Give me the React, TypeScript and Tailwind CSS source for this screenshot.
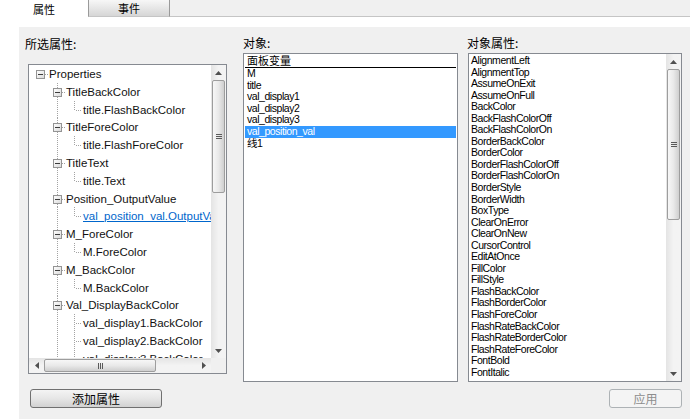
import React from 'react';

type TreeItem = { l: number; t: string; link?: boolean; full?: boolean };

const tree: TreeItem[] = [
  { l: 0, t: 'Properties' },
  { l: 1, t: 'TitleBackColor' },
  { l: 2, t: 'title.FlashBackColor' },
  { l: 1, t: 'TitleForeColor' },
  { l: 2, t: 'title.FlashForeColor' },
  { l: 1, t: 'TitleText' },
  { l: 2, t: 'title.Text' },
  { l: 1, t: 'Position_OutputValue' },
  { l: 2, t: 'val_position_val.OutputValue', link: true },
  { l: 1, t: 'M_ForeColor' },
  { l: 2, t: 'M.ForeColor' },
  { l: 1, t: 'M_BackColor' },
  { l: 2, t: 'M.BackColor' },
  { l: 1, t: 'Val_DisplayBackColor' },
  { l: 2, t: 'val_display1.BackColor', full: true },
  { l: 2, t: 'val_display2.BackColor', full: true },
  { l: 2, t: 'val_display3.BackColor' },
];

const objects = ['M', 'title', 'val_display1', 'val_display2', 'val_display3', 'val_position_val', '线1'];

const props = [
  'AlignmentLeft', 'AlignmentTop', 'AssumeOnExit', 'AssumeOnFull', 'BackColor', 'BackFlashColorOff',
  'BackFlashColorOn', 'BorderBackColor', 'BorderColor', 'BorderFlashColorOff', 'BorderFlashColorOn',
  'BorderStyle', 'BorderWidth', 'BoxType', 'ClearOnError', 'ClearOnNew', 'CursorControl', 'EditAtOnce',
  'FillColor', 'FillStyle', 'FlashBackColor', 'FlashBorderColor', 'FlashForeColor', 'FlashRateBackColor',
  'FlashRateBorderColor', 'FlashRateForeColor', 'FontBold', 'FontItalic',
];

const DOT = '#a3a3a3';

function MinusBox({ x }: { x: number }) {
  return (
    <g>
      <defs>
        <linearGradient id="boxg" x1="0" y1="0" x2="1" y2="1">
          <stop offset="0" stopColor="#ffffff" />
          <stop offset="1" stopColor="#d9d9d9" />
        </linearGradient>
      </defs>
      <rect x={x + 0.5} y={5.5} width={8} height={8} fill="url(#boxg)" stroke="#949494" />
      <line x1={x + 2} x2={x + 7} y1={9.5} y2={9.5} stroke="#3c3c3c" />
    </g>
  );
}

function TreeRow({ item }: { item: TreeItem }) {
  const w = 20 + 17 * item.l;
  return (
    <div className="flex h-[17.8px] items-start whitespace-nowrap">
      <svg width={w} height={18} className="shrink-0 overflow-visible" shapeRendering="crispEdges">
        {item.l >= 1 && (
          <line x1={28.5} x2={28.5} y1={0} y2={18} stroke={DOT} strokeDasharray="1 1" />
        )}
        {item.l === 0 && (
          <>
            <line x1={16} x2={20} y1={9.5} y2={9.5} stroke={DOT} strokeDasharray="1 1" />
            <MinusBox x={7} />
          </>
        )}
        {item.l === 1 && (
          <>
            <line x1={33} x2={37} y1={9.5} y2={9.5} stroke={DOT} strokeDasharray="1 1" />
            <MinusBox x={24} />
          </>
        )}
        {item.l === 2 && (
          <>
            <line x1={45.5} x2={45.5} y1={0} y2={item.full ? 18 : 9} stroke={DOT} strokeDasharray="1 1" />
            <line x1={47} x2={53} y1={9.5} y2={9.5} stroke={DOT} strokeDasharray="1 1" />
          </>
        )}
      </svg>
      <span
        className={
          item.link
            ? 'text-[11.5px] leading-[18px] text-[#0066cc] underline'
            : 'text-[11.5px] leading-[18px] text-[#111111]'
        }
      >
        {item.t}
      </span>
    </div>
  );
}

function Tri({ dir }: { dir: 'up' | 'down' | 'left' | 'right' }) {
  const pts =
    dir === 'up'
      ? '0,4 7,4 3.5,0'
      : dir === 'down'
      ? '0,0 7,0 3.5,4'
      : dir === 'left'
      ? '4,0 4,7 0,3.5'
      : '0,0 0,7 4,3.5';
  const horiz = dir === 'left' || dir === 'right';
  return (
    <svg width={horiz ? 4 : 7} height={horiz ? 7 : 4}>
      <polygon points={pts} fill="#505050" />
    </svg>
  );
}

function VScroll({ thumb }: { thumb: number }) {
  return (
    <div className="flex w-[15px] shrink-0 flex-col bg-gradient-to-r from-[#e4e4e4] via-[#f3f3f3] to-[#f3f3f3]">
      <div className="flex h-[15px] items-center justify-center">
        <Tri dir="up" />
      </div>
      <div className="flex-1">
        <div
          className="mx-[1px] flex flex-col items-center justify-center gap-[1px] rounded-[2px] border border-[#9d9d9d] bg-gradient-to-r from-[#f7f7f7] via-[#e9e9e9] to-[#cfcfcf]"
          style={{ height: thumb }}
        >
          <div className="h-[1px] w-[6px] bg-[#5a5a5a]" />
          <div className="h-[1px] w-[6px] bg-[#5a5a5a]" />
          <div className="h-[1px] w-[6px] bg-[#5a5a5a]" />
        </div>
      </div>
      <div className="flex h-[15px] items-center justify-center">
        <Tri dir="down" />
      </div>
    </div>
  );
}

function HScroll({ thumb }: { thumb: number }) {
  return (
    <div className="flex h-[15px] flex-1 bg-gradient-to-b from-[#e4e4e4] via-[#f3f3f3] to-[#f3f3f3]">
      <div className="flex w-[15px] items-center justify-center">
        <Tri dir="left" />
      </div>
      <div className="flex-1 py-[1px]">
        <div
          className="flex h-full items-center justify-center gap-[1px] rounded-[2px] border border-[#9d9d9d] bg-gradient-to-b from-[#f7f7f7] via-[#e9e9e9] to-[#cfcfcf]"
          style={{ width: thumb }}
        >
          <div className="h-[6px] w-[1px] bg-[#5a5a5a]" />
          <div className="h-[6px] w-[1px] bg-[#5a5a5a]" />
          <div className="h-[6px] w-[1px] bg-[#5a5a5a]" />
        </div>
      </div>
      <div className="flex w-[15px] items-center justify-center">
        <Tri dir="right" />
      </div>
    </div>
  );
}

export default function App() {
  return (
    <div className="h-[419px] w-[690px] overflow-hidden bg-white font-['Liberation_Sans','Noto_Sans_CJK_SC',sans-serif] text-black">
      {/* tabs */}
      <div className="flex h-[17px]">
        <div className="flex w-[88px] items-center justify-center font-['Noto_Sans_CJK_SC',sans-serif] text-[11px] leading-[14px]">
          属性
        </div>
        <div className="flex w-[82px] items-center justify-center border-x border-b border-x-[#9a9a9a] border-b-[#c5c5c5] bg-gradient-to-b from-[#f7f7f7] to-[#d6d6d6] font-['Noto_Sans_CJK_SC',sans-serif] text-[11px] leading-[14px]">
          事件
        </div>
        <div className="flex-1 border-b border-[#c5c5c5] bg-[#f0f0f0]" />
      </div>
      <div className="h-[10px]" />

      {/* panel */}
      <div className="ml-[19px] flex h-[392px] flex-col bg-[#f0f0f0]">
        <div className="flex h-[362px]">
          {/* left column */}
          <div className="ml-[6px] flex w-[202px] flex-col pt-[10px]">
            <div className="h-[14px] font-['Noto_Sans_CJK_SC',sans-serif] text-[12px] leading-[14px]">所选属性:</div>
            <div className="ml-[3px] mt-[13px] flex h-[310px] w-[199px] flex-col border border-[#868a91] bg-white">
              <div className="flex min-h-0 flex-1">
                <div className="min-w-0 flex-1 overflow-hidden">
                  {tree.map((it, i) => (
                    <TreeRow key={i} item={it} />
                  ))}
                </div>
                <VScroll thumb={113} />
              </div>
              <div className="flex h-[15px]">
                <HScroll thumb={112} />
                <div className="w-[15px] bg-[#f0f0f0]" />
              </div>
            </div>
          </div>

          {/* middle column */}
          <div className="ml-[16px] flex w-[215px] flex-col pt-[9px]">
            <div className="h-[14px] font-['Noto_Sans_CJK_SC',sans-serif] text-[12px] leading-[14px]">对象:</div>
            <div className="mt-[3px] h-[329px] border border-[#868a91] bg-white">
              <div className="mx-[1px] h-[14px] border-b border-black pl-[2px] font-['Noto_Sans_CJK_SC',sans-serif] text-[11px] leading-[13px]">
                面板变量
              </div>
              {objects.map((o, i) =>
                o === 'val_position_val' ? (
                  <div
                    key={i}
                    className="mx-[1px] h-[11.6px] bg-[#3399ff] pl-[2px] text-[10.5px] leading-[11.6px] tracking-[-0.45px] text-white"
                  >
                    {o}
                  </div>
                ) : (
                  <div
                    key={i}
                    className="mx-[1px] h-[11.6px] pl-[2px] text-[10.5px] leading-[11.6px] tracking-[-0.45px]"
                  >
                    {o}
                  </div>
                )
              )}
            </div>
          </div>

          {/* right column */}
          <div className="ml-[9px] flex w-[215px] flex-col pt-[9px]">
            <div className="h-[14px] font-['Noto_Sans_CJK_SC',sans-serif] text-[12px] leading-[14px]">对象属性:</div>
            <div className="ml-[1px] mt-[3px] flex h-[329px] w-[214px] border border-[#868a91] bg-white">
              <div className="min-w-0 flex-1 overflow-hidden pt-[1px]">
                {props.map((p, i) => (
                  <div key={i} className="h-[11.55px] pl-[2px] text-[10.5px] leading-[11.55px] tracking-[-0.45px]">
                    {p}
                  </div>
                ))}
              </div>
              <VScroll thumb={151} />
            </div>
          </div>
        </div>

        {/* buttons */}
        <div className="flex h-[19px] items-start justify-between pr-[8px]">
          <div className="ml-[11px] flex h-[19px] w-[132px] items-center justify-center rounded-[3px] border border-[#707070] bg-gradient-to-b from-[#f4f4f4] via-[#e6e6e6] to-[#d2d2d2] font-['Noto_Sans_CJK_SC',sans-serif] text-[12px] leading-[14px]">
            添加属性
          </div>
          <div className="flex h-[19px] w-[73px] items-center justify-center rounded-[3px] border border-[#adb2b5] bg-[#f4f4f4] font-['Noto_Sans_CJK_SC',sans-serif] text-[12px] leading-[14px] text-[#8d8d8d]">
            应用
          </div>
        </div>
      </div>
    </div>
  );
}
